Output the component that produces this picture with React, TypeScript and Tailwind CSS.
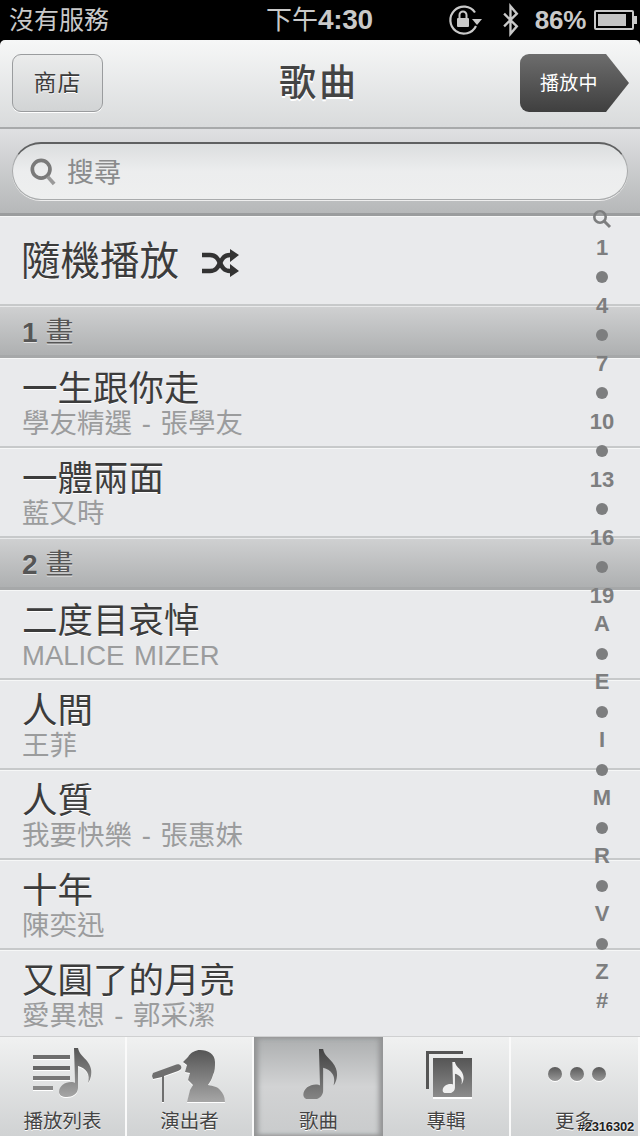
import React from "react";

const INDEX_ITEMS = ["Q", "1", "•", "4", "•", "7", "•", "10", "•", "13", "•", "16", "•", "19", "A", "•", "E", "•", "I", "•", "M", "•", "R", "•", "V", "•", "Z", "#"];

type Row =
  | { type: "head"; label: string; unit: string }
  | { type: "song"; title: string; sub: string };

const ROWS: Row[] = [
  { type: "head", label: "1", unit: "畫" },
  { type: "song", title: "一生跟你走", sub: "學友精選 - 張學友" },
  { type: "song", title: "一體兩面", sub: "藍又時" },
  { type: "head", label: "2", unit: "畫" },
  { type: "song", title: "二度目哀悼", sub: "MALICE MIZER" },
  { type: "song", title: "人間", sub: "王菲" },
  { type: "song", title: "人質", sub: "我要快樂 - 張惠妹" },
  { type: "song", title: "十年", sub: "陳奕迅" },
  { type: "song", title: "又圓了的月亮", sub: "愛異想 - 郭采潔" },
];

function Defs() {
  return (
    <svg width="0" height="0" className="absolute">
      <defs>
        <linearGradient id="tabGrad" x1="0" y1="0" x2="0" y2="1">
          <stop offset="0" stopColor="#555" />
          <stop offset="1" stopColor="#a6a6a6" />
        </linearGradient>
        <linearGradient id="tabGradDark" x1="0" y1="0" x2="0" y2="1">
          <stop offset="0" stopColor="#444" />
          <stop offset="1" stopColor="#858585" />
        </linearGradient>
      </defs>
    </svg>
  );
}

// music note, 34 x 48
const NOTE = "M16 0h4c1 6 6 9 9 13 4 5 5 10 4 15-.6 3-1.500 5-3 7 1-4 1-8-1-11-2-3-5-5-9-6v22c0 6-6 9-11 9-5 0-8-2-8-5 0-6 6-10 12-10 2 0 3 0 4 1z";

function Status() {
  return (
    <div className="h-10 bg-black flex items-center justify-between pl-[9px] pr-[6px] text-[#c9c9c9] text-[25px] leading-none relative">
      <span className="mt-[1px]">沒有服務</span>
      <span className="absolute left-[266px] top-[6px] text-[26px] flex items-center">
        下午<span className="font-bold text-[28px] -tracking-[0.3px]">4:30</span>
      </span>
      <div className="flex items-center">
        <svg width="36" height="32" viewBox="0 0 36 32" className="mr-[15px] -translate-x-[3px]" fill="none">
          <path d="M27 8.500A13.500 13.500 0 1 0 28 22" stroke="#c9c9c9" strokeWidth="2.2" />
          <path d="M24 15h10l-5 6z" fill="#c9c9c9" />
          <rect x="9" y="14" width="12" height="9" rx="1" fill="#c9c9c9" />
          <path d="M11.500 14v-3a3.500 3.500 0 0 1 7 0v3" stroke="#c9c9c9" strokeWidth="2" />
        </svg>
        <svg width="18" height="34" viewBox="0 0 16 32" className="mr-[15px]" fill="none">
          <path d="M1.500 10l12 12-6 7V3l6 7-12 12" stroke="#c9c9c9" strokeWidth="2.2" />
        </svg>
        <span className="font-bold text-[26px] mr-[8px] -tracking-[0.3px]">86%</span>
        <div className="w-[40px] h-[20px] border-2 border-[#c9c9c9] rounded-[2px] p-[2px] relative">
          <div className="h-full w-[28px] bg-[#c4c4c4]" />
          <div className="absolute -right-[5px] top-[4px] w-[3px] h-[8px] bg-[#c9c9c9]" />
        </div>
      </div>
    </div>
  );
}

function NavBar() {
  return (
    <div className="h-[89px] rounded-t-[5px] bg-gradient-to-b from-[#f6f7f7] to-[#d9dbdc] border-b-2 border-[#a8aaab] flex items-center justify-between pl-[12px] pr-[10px] relative">
      <button className="w-[91px] h-[58px] -mt-[2px] rounded-[9px] border border-[#9a9c9e] bg-gradient-to-b from-[#ebecec] to-[#d2d4d5] text-[#3c3c3c] text-[23px] tracking-[1px] shadow-[0_1px_0_#fff] [text-shadow:0_1px_0_#fff]">
        <span className="relative top-[1px]">商店</span>
      </button>
      <h1 className="absolute left-0 right-[2px] text-center text-[37px] leading-none tracking-[3px] text-[#444] font-medium [text-shadow:0_2px_0_#fff] pointer-events-none">
        歌曲
      </h1>
      <div className="relative w-[110px] h-[58px] -mt-[2px]">
        <svg width="110" height="58" viewBox="0 0 110 58" className="absolute inset-0">
          <defs>
            <linearGradient id="playing" x1="0" y1="0" x2="0" y2="1">
              <stop offset="0" stopColor="#6d6d6d" />
              <stop offset="1" stopColor="#3f3f3f" />
            </linearGradient>
          </defs>
          <path d="M9 0h77l23 29-23 29H9a9 9 0 0 1-9-9V9a9 9 0 0 1 9-9z" fill="url(#playing)" />
        </svg>
        <span className="absolute left-[20px] top-[17px] text-[19px] leading-[26px] tracking-[0.2px] text-white">播放中</span>
      </div>
    </div>
  );
}

function SearchBar() {
  return (
    <div className="h-[87px] bg-gradient-to-b from-[#dfe0e2] to-[#b6b8b9] border-b-[3px] border-[#9b9d9e] pl-[12px] pr-[12px] pt-[13px]">
      <div className="h-[58px] rounded-full border border-[#a9abac] border-t-[2px] border-t-[#5f6061] bg-gradient-to-b from-[#dcdedf] via-[#ecedee] to-[#eeefef] shadow-[0_1px_0_#eee] flex items-center pl-[17px]">
        <svg width="26" height="30" viewBox="0 0 28 30" fill="none">
          <circle cx="12" cy="12" r="9.500" stroke="#7a7a7a" strokeWidth="4" />
          <path d="M19 20l7 8" stroke="#9a9a9a" strokeWidth="4" />
        </svg>
        <span className="ml-[11px] text-[27px] leading-none text-[#8a8b8c] mt-[3px]">搜尋</span>
      </div>
    </div>
  );
}

function SectionHead({ label, unit }: { label: string; unit: string }) {
  return (
    <div className="h-[52px] border-t border-[#e8e9ea] border-b-[3px] border-b-[#a6a8a9] bg-gradient-to-b from-[#cfd0d1] to-[#aeb0b1] flex items-center pl-[22px] pt-[3px] text-[#565656] [text-shadow:0_1px_0_#e4e4e4]">
      <span className="font-bold text-[28px] leading-none mr-[8px]">{label}</span>
      <span className="text-[28px] leading-none">{unit}</span>
    </div>
  );
}

function SongRow({ title, sub }: { title: string; sub: string }) {
  return (
    <div className="h-[90px] bg-[#e9eaec] border-t border-[#f6f7f7] border-b-2 border-b-[#c7c9ca] pl-[22px] pt-[10px]">
      <div className="text-[35.500px] leading-[40px] text-[#3c3c3c] [text-shadow:0_1px_0_#fff]">{title}</div>
      <div className="text-[27.500px] leading-[29px] text-[#9b9c9d] [word-spacing:2px]">{sub}</div>
    </div>
  );
}

function SideIndex() {
  return (
    <div className="absolute top-[204px] right-[24px] w-[28px] flex flex-col items-center text-[#7d7e7f] font-bold text-[22px] leading-none">
      {INDEX_ITEMS.map((it, i) => (
        <div key={i} className="h-[29px] w-[40px] flex items-center justify-center">
          {it === "Q" ? (
            <svg width="20" height="20" viewBox="0 0 20 20" fill="none">
              <circle cx="8" cy="8" r="5.700" stroke="#7d7e7f" strokeWidth="2.600" />
              <path d="M12 12l6 6" stroke="#7d7e7f" strokeWidth="3" />
            </svg>
          ) : it === "•" ? (
            <div className="w-[12px] h-[12px] rounded-full bg-[#7d7e7f]" />
          ) : i >= 14 ? (
            <span className="-mt-[2px]">{it}</span>
          ) : (
            it
          )}
        </div>
      ))}
    </div>
  );
}

function Tab({ label, active, width, children }: { label: string; active?: boolean; width: string; children: React.ReactNode }) {
  return (
    <div
      className={
        active
          ? `${width} h-full flex flex-col items-center bg-gradient-to-b from-[#acaeaf] via-[#d2d3d4] to-[#c9cbcc] shadow-[inset_4px_0_5px_#929394,inset_-4px_0_5px_#929394]`
          : `${width} h-full flex flex-col items-center bg-gradient-to-b from-[#f0f1f1] to-[#d0d2d3] border-r-2 border-[#fafafa]`
      }
    >
      <div className="h-[68px] w-full relative">{children}</div>
      <span className="text-[19.500px] leading-none mt-[7px] text-[#444] [text-shadow:0_1px_0_#fff]">{label}</span>
    </div>
  );
}

function TabBar() {
  return (
    <div className="h-[100px] flex bg-[#d8d9da] border-t border-[#cfd0d1] overflow-hidden">
      <Tab label="播放列表" width="w-[127px]">
        <svg width="60" height="52" viewBox="0 0 60 52" className="absolute left-[33px] top-[11px] [filter:drop-shadow(0_1px_0_#fff)]">
          <rect x="0" y="7" width="37" height="4" fill="#6d6d6d" />
          <rect x="0" y="18" width="37" height="4" fill="#666" />
          <rect x="0" y="28" width="37" height="4" fill="#777" />
          <rect x="0" y="38" width="20" height="4" fill="#888" />
          <path transform="translate(25 0)" d={NOTE} fill="url(#tabGrad)" />
        </svg>
      </Tab>
      <Tab label="演出者" width="w-[127px]">
        <svg width="76" height="56" viewBox="0 0 76 56" className="absolute left-[23px] top-[11px] [filter:drop-shadow(0_1px_0_#fff)]">
          <path d="M3 25l22-8c2-1 5-1 6 1 1 2 0 4-3 5l-14 5v26h-2V29l-9 2-1-3z" fill="#6f6f6f" />
          <path d="M50 2c8 0 15 4 15 12 0 5 0 9-2 13-1 4-3 7-5 10 5 1 10 2 12 5 3 3 5 7 5 12H37l3-12 3-5-5-5 2-7-5-1 2-7-4-3 5-5c3-5 8-7 12-7z" fill="url(#tabGrad)" />
        </svg>
      </Tab>
      <Tab label="歌曲" active width="w-[129px]">
        <svg width="36" height="50" viewBox="0 0 34 48" className="absolute left-[48px] top-[12px]">
          <path d={NOTE} fill="url(#tabGradDark)" />
        </svg>
      </Tab>
      <Tab label="專輯" width="w-[128px]">
        <div className="absolute left-[43px] top-[14px] w-[37px] h-[38px] border-t-[3px] border-l-[3px] border-[#555]" />
        <div className="absolute left-[50px] top-[21px] w-[39px] h-[39px] bg-gradient-to-b from-[#555] to-[#8c8c8c] shadow-[0_2px_0_#fff] flex items-center justify-center">
          <svg width="22" height="31" viewBox="0 0 34 48">
            <path d={NOTE} fill="#efefef" />
          </svg>
        </div>
      </Tab>
      <Tab label="更多" width="w-[129px]">
        <div className="absolute left-[37px] top-[30px] flex gap-[8px]">
          <div className="w-[14px] h-[14px] rounded-full bg-gradient-to-b from-[#5a5a5a] to-[#9a9a9a] shadow-[0_1px_0_#fff]" />
          <div className="w-[14px] h-[14px] rounded-full bg-gradient-to-b from-[#5a5a5a] to-[#9a9a9a] shadow-[0_1px_0_#fff]" />
          <div className="w-[14px] h-[14px] rounded-full bg-gradient-to-b from-[#5a5a5a] to-[#9a9a9a] shadow-[0_1px_0_#fff]" />
        </div>
      </Tab>
    </div>
  );
}

export default function App() {
  return (
    <div className="relative w-[640px] h-[1136px] overflow-hidden bg-black font-['Liberation_Sans','Noto_Sans_CJK_TC',sans-serif]">
      <Defs />
      <Status />
      <NavBar />
      <SearchBar />
      <div className="h-[820px] bg-[#e9eaec] overflow-hidden">
        <div className="h-[90px] bg-[#e9eaec] border-t border-[#f6f7f7] border-b-2 border-b-[#c7c9ca] pl-[21px] pt-[2px] flex items-center">
          <span className="text-[39.500px] leading-none text-[#3c3c3c] [text-shadow:0_1px_0_#fff]">隨機播放</span>
          <svg width="38" height="28" viewBox="0 0 38 28" className="ml-[22px] mt-[2px]" fill="none">
            <path d="M1 6h8c6 0 8 4 10 8s4 8 10 8h2" stroke="#333" strokeWidth="4.500" />
            <path d="M1 22h8c6 0 8-4 10-8s4-8 10-8h2" stroke="#333" strokeWidth="4.500" />
            <path d="M29 0l9 6-9 7zM29 15l9 7-9 6z" fill="#333" />
          </svg>
        </div>
        {ROWS.map((r, i) =>
          r.type === "head" ? (
            <SectionHead key={i} label={r.label} unit={r.unit} />
          ) : (
            <SongRow key={i} title={r.title} sub={r.sub} />
          ),
        )}
      </div>
      <SideIndex />
      <div className="absolute left-0 right-0 bottom-0">
        <TabBar />
      </div>
      <span className="absolute right-[6px] bottom-[3px] text-[13px] tracking-[-0.2px] font-bold leading-none text-[#222] [text-shadow:0_0_2px_#fff,0_0_2px_#fff]">#2316302</span>
    </div>
  );
}
